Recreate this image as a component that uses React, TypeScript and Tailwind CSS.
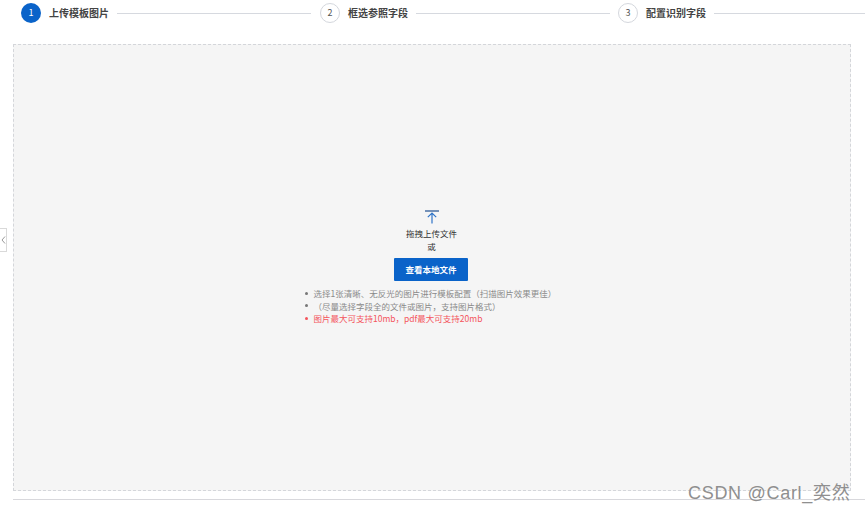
const FONT = "font-['Microsoft_YaHei','Noto_Sans_CJK_SC',sans-serif]";

function Step({ n, label, active, tail }: { n: number; label: string; active?: boolean; tail: string }) {
  return (
    <div className={`flex items-center ${tail}`}>
      <div
        className={`flex h-5 w-5 shrink-0 items-center justify-center rounded-full text-[9px] ${
          active ? 'bg-[#0a63c9] text-white' : 'border border-[#d4d7dd] bg-white text-[#555]'
        }`}
      >
        {n}
      </div>
      <span className="ml-2 w-[60px] shrink-0 whitespace-nowrap text-[10px] leading-none font-bold text-[#444]">{label}</span>
      <div className="ml-2 h-px flex-1 bg-[#d6d9df]" />
    </div>
  );
}

function Tip({ text, red }: { text: string; red?: boolean }) {
  return (
    <li className={`flex items-center ${red ? 'text-[#f4545c]' : 'text-[#8a8a8a]'}`}>
      <span className={`h-[3px] w-[3px] shrink-0 rounded-full ${red ? 'bg-[#f4545c]' : 'bg-[#777]'}`} />
      <span className="ml-[6px]">{text}</span>
    </li>
  );
}

export default function App() {
  return (
    <div className={`relative h-[511px] w-[865px] overflow-hidden bg-white ${FONT}`}>
      <div className="flex h-[44px] items-start pt-[3px] pl-[21px]">
        <Step n={1} label="上传模板图片" active tail="w-[299px] pr-[9px]" />
        <Step n={2} label="框选参照字段" tail="w-[298px] pr-2" />
        <Step n={3} label="配置识别字段" tail="flex-1" />
      </div>

      <div className="ml-[13px] flex h-[447px] w-[838px] flex-col items-center border border-dashed border-[#d4d6da] bg-[#f5f5f5] pt-[165px] pr-px">
        <svg width="16" height="14" viewBox="0 0 16 14" fill="none">
          <path d="M1 1H15" stroke="#1f4f8f" strokeWidth="1.2" />
          <path d="M8 13.5V3M3.8 7.2L8 3L12.2 7.2" stroke="#2f74c8" strokeWidth="1.2" />
        </svg>
        <div className="mt-[3px] text-center text-[8.5px] leading-[13px] text-[#333]">
          <div>拖拽上传文件</div>
          <div>或</div>
        </div>
        <button className="mt-[5px] mr-px flex h-[23px] w-[74px] items-center justify-center rounded-[1px] bg-[#0a63c9] text-[8.5px] font-bold text-white">
          查看本地文件
        </button>
        <ul className="mt-[6px] -ml-[6px] flex w-[248px] flex-col text-[8.5px] leading-[12.5px] whitespace-nowrap">
          <Tip text="选择1张清晰、无反光的图片进行模板配置（扫描图片效果更佳）" />
          <Tip text="（尽量选择字段全的文件或图片，支持图片格式）" />
          <Tip text="图片最大可支持10mb，pdf最大可支持20mb" red />
        </ul>
      </div>

      <div className="mt-2 ml-[13px] h-px bg-[#d8d8dc]" />

      <div className="absolute top-[228px] left-0 flex h-[24px] w-[7px] items-center justify-center border border-l-0 border-[#d9d9d9] bg-white">
        <svg width="5" height="8" viewBox="0 0 5 8" fill="none">
          <path d="M4 0.5L1 4L4 7.5" stroke="#9a9a9a" strokeWidth="1" />
        </svg>
      </div>

      <div className="absolute top-[482px] left-[688px] font-['Liberation_Sans','Noto_Sans_CJK_SC',sans-serif] text-[18px] leading-[22px] tracking-[0.7px] whitespace-nowrap text-[#8f8f8f]">
        CSDN @Carl_奕然
      </div>
    </div>
  );
}
